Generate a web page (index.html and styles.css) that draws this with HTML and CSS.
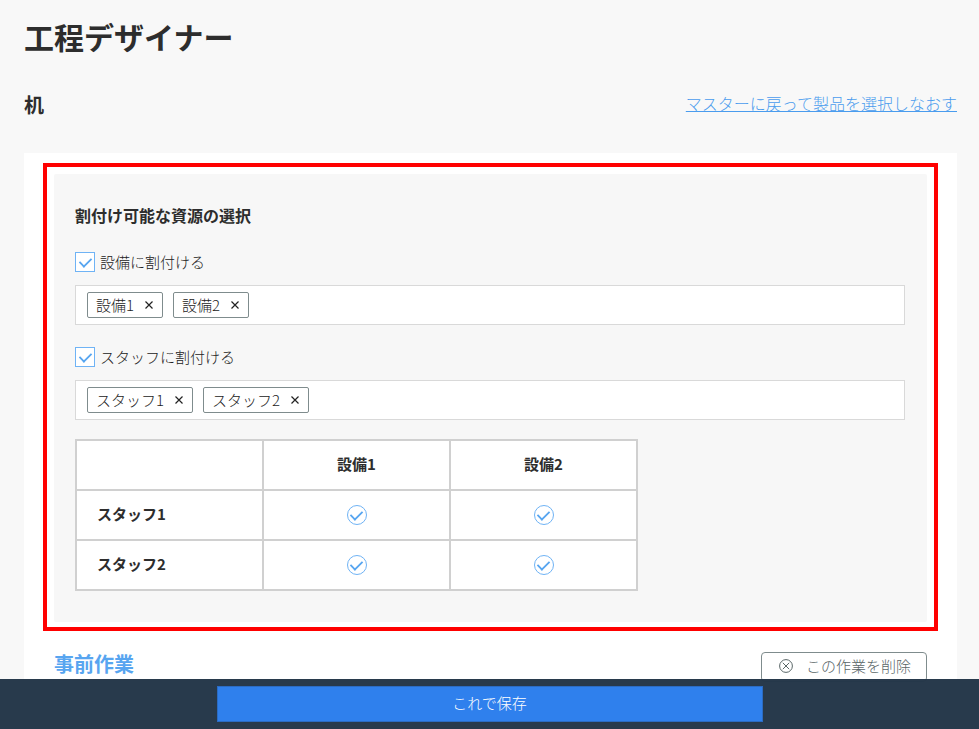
FILE: index.html
```html
<!DOCTYPE html>
<html lang="ja">
  <head>
    <meta charset="utf-8">
    <meta name="viewport" content="width=device-width, initial-scale=1">
    <title>工程デザイナー</title>
    <link rel="stylesheet" href="styles.css">
  </head>
  <body>
    <main class="page">
      <h1 class="page-title">工程デザイナー</h1>
      <div class="product">
        <h2 class="product-name">机</h2>
        <a class="back-link" href="#">マスターに戻って製品を選択しなおす</a>
      </div>

      <div class="card">
        <div class="highlight">
          <section class="panel">
            <h3 class="panel-title">割付け可能な資源の選択</h3>

            <label class="check-label">
              <input class="check" type="checkbox" checked>
              設備に割付ける
            </label>
            <div class="tag-box">
              <span class="tag">設備1
                <button class="tag-remove" type="button" aria-label="設備1を外す">
                  <svg width="8" height="8" viewBox="0 0 8 8"><path d="M0.5 0.5l7 7M7.5 0.5l-7 7" /></svg>
                </button>
              </span>
              <span class="tag">設備2
                <button class="tag-remove" type="button" aria-label="設備2を外す">
                  <svg width="8" height="8" viewBox="0 0 8 8"><path d="M0.5 0.5l7 7M7.5 0.5l-7 7" /></svg>
                </button>
              </span>
            </div>

            <label class="check-label">
              <input class="check" type="checkbox" checked>
              スタッフに割付ける
            </label>
            <div class="tag-box">
              <span class="tag">スタッフ1
                <button class="tag-remove" type="button" aria-label="スタッフ1を外す">
                  <svg width="8" height="8" viewBox="0 0 8 8"><path d="M0.5 0.5l7 7M7.5 0.5l-7 7" /></svg>
                </button>
              </span>
              <span class="tag">スタッフ2
                <button class="tag-remove" type="button" aria-label="スタッフ2を外す">
                  <svg width="8" height="8" viewBox="0 0 8 8"><path d="M0.5 0.5l7 7M7.5 0.5l-7 7" /></svg>
                </button>
              </span>
            </div>

            <table class="matrix">
              <thead>
                <tr>
                  <td></td>
                  <th scope="col">設備1</th>
                  <th scope="col">設備2</th>
                </tr>
              </thead>
              <tbody>
                <tr>
                  <th scope="row">スタッフ1</th>
                  <td><input class="check round" type="checkbox" aria-label="スタッフ1 設備1" checked></td>
                  <td><input class="check round" type="checkbox" aria-label="スタッフ1 設備2" checked></td>
                </tr>
                <tr>
                  <th scope="row">スタッフ2</th>
                  <td><input class="check round" type="checkbox" aria-label="スタッフ2 設備1" checked></td>
                  <td><input class="check round" type="checkbox" aria-label="スタッフ2 設備2" checked></td>
                </tr>
              </tbody>
            </table>
          </section>
        </div>

        <div class="work-header">
          <h2 class="work-title">事前作業</h2>
          <button class="delete-button" type="button">
            <svg width="14" height="14" viewBox="0 0 14 14">
              <circle cx="7" cy="7" r="6.4" />
              <path d="M3.8 3.8l6.4 6.4M10.2 3.8l-6.4 6.4" />
            </svg>
            この作業を削除
          </button>
        </div>
      </div>
    </main>

    <footer class="save-bar">
      <button class="save-button" type="submit">これで保存</button>
    </footer>
  </body>
</html>
```

FILE: styles.css
```css
* {
  box-sizing: border-box;
}
body {
  margin: 0;
  background-color: #f8f8f8;
  color: #222;
  font-family: "Noto Sans CJK JP", sans-serif;
  font-size: 15px;
  font-weight: 300;
  line-height: 20px;
}
h1,
h2,
h3 {
  margin: 0;
}
h1,
h2,
h3,
th {
  color: #2d2d2d;
}
button,
input {
  font: inherit;
  margin: 0;
}
svg {
  flex: none;
  fill: none;
  stroke: currentColor;
}
.page {
  padding: 16px 22px 0 24px;
}
.page-title {
  font-size: 30px;
  line-height: 40px;
  margin-bottom: 37px;
}
.product {
  display: flex;
  justify-content: space-between;
  margin-bottom: 36px;
}
.product-name {
  font-size: 20px;
  line-height: 24px;
}
.back-link {
  color: #4a9cee;
  font-size: 16px;
}
.card {
  background-color: #fff;
  padding: 10px 19px 80px;
}
/* red frame round the resource settings */
.highlight {
  border: 4px solid #f00;
  padding: 7px 7px 5px;
}
.panel {
  background-color: #f7f7f7;
  border-radius: 2px;
  padding: 31px 22px 31px 21px;
}
.panel-title {
  font-size: 16px;
  margin-bottom: 27px;
}
.check-label {
  display: flex;
  align-items: center;
  gap: 5px;
  width: fit-content;
  margin-bottom: 13px;
}
.check {
  appearance: none;
  display: grid;
  place-items: center;
  width: 20px;
  height: 20px;
  background-color: #fff;
  border: 1px solid #6fb3f5;
}
.check:checked::before {
  content: "";
  width: 11px;
  height: 6px;
  border: solid #57a5f0;
  border-width: 0 0 2px 2px;
  transform: translateY(-1px) rotate(-45deg) scale(0.9);
}
.round {
  border-radius: 50%;
  margin: 0 auto;
}
.tag-box {
  display: flex;
  align-items: center;
  gap: 10px;
  min-height: 40px;
  padding: 0 11px;
  margin-bottom: 22px;
  background-color: #fff;
  border: 1px solid #d9d9d9;
}
.tag {
  display: flex;
  align-items: center;
  gap: 6px;
  height: 26px;
  padding: 0 4px 0 8px;
  border: 1px solid #7f8c8d;
  border-radius: 2px;
}
.tag-remove {
  display: grid;
  place-items: center;
  width: 18px;
  height: 18px;
  padding: 0;
  border: 0;
  background: none;
  color: #222;
  cursor: pointer;
}
.tag-remove svg {
  stroke-width: 1.2;
}
.matrix {
  margin-top: -3px;
  table-layout: fixed;
  width: 563px;
  max-width: 100%;
  border-collapse: collapse;
  background-color: #fff;
}
.matrix th,
.matrix td {
  height: 50px;
  padding: 0 20px;
  border: 2px solid #d0d0d0;
  text-align: center;
}
.matrix th {
  padding-bottom: 3px;
}
.matrix tbody th {
  text-align: left;
}
.work-header {
  display: flex;
  justify-content: space-between;
  align-items: flex-start;
  padding: 21px 11px 0;
}
.work-title {
  color: #57a5f0;
  font-size: 20px;
  line-height: 24px;
}
.delete-button {
  display: flex;
  align-items: center;
  gap: 13px;
  height: 30px;
  padding: 0 15px 2px 17px;
  background-color: #fff;
  border: 1px solid #7f8c8d;
  border-radius: 4px;
  color: #596667;
  cursor: pointer;
}
.save-bar {
  position: fixed;
  bottom: 0;
  left: 0;
  right: 0;
  display: flex;
  justify-content: center;
  padding: 7px 20px;
  background-color: rgba(36, 54, 72, 0.98);
}
.save-button {
  width: 546px;
  height: 36px;
  padding: 0 0 2px;
  background-color: #2f80ed;
  border: 1px solid #2b6cc4;
  color: #fff;
  cursor: pointer;
}
```
